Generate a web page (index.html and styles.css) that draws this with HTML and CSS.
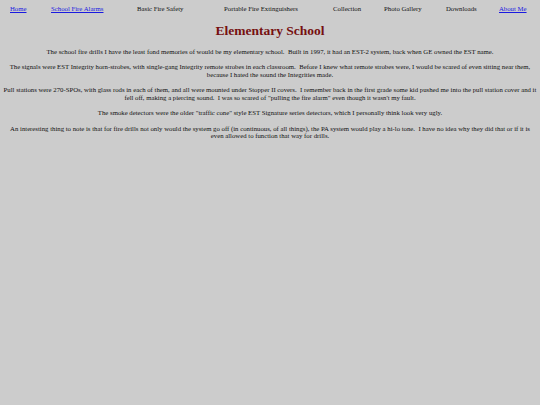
FILE: index.html
```html
<!DOCTYPE html>
<html>
<head>
<meta charset="utf-8">
<title>Elementary School</title>
<link rel="stylesheet" href="styles.css">
</head>
<body>
<nav class="nav">
<a href="#">Home</a>
<a href="#">School Fire Alarms</a>
<span>Basic Fire Safety</span>
<span>Portable Fire Extinguishers</span>
<span>Collection</span>
<span>Photo Gallery</span>
<span>Downloads</span>
<a href="#">About Me</a>
</nav>
<h1 class="title">Elementary School</h1>
<p>The school fire drills I have the least fond memories of would be my elementary school.&nbsp; Built in 1997, it had an EST-2 system, back when GE owned the EST name.</p>
<p>The signals were EST Integrity horn-strobes, with single-gang Integrity remote strobes in each classroom.&nbsp; Before I knew what remote strobes were, I would be scared of even sitting near them, because I hated the sound the Integrities made.</p>
<p>Pull stations were 270-SPOs, with glass rods in each of them, and all were mounted under Stopper II covers.&nbsp; I remember back in the first grade some kid pushed me into the pull station cover and it fell off, making a piercing sound.&nbsp; I was so scared of "pulling the fire alarm" even though it wasn't my fault.</p>
<p>The smoke detectors were the older "traffic cone" style EST Signature series detectors, which I personally think look very ugly.</p>
<p>An interesting thing to note is that for fire drills not only would the system go off (in continuous, of all things), the PA system would play a hi-lo tone.&nbsp; I have no idea why they did that or if it is even allowed to function that way for drills.</p>
</body>
</html>
```
FILE: styles.css
```css
html { background: #cccccc; }
body {
  margin: 2px 3px;
  font-family: "Liberation Serif", "Times New Roman", serif;
  font-size: 6.75px;
  line-height: 7.5px;
  color: #111;
  text-align: center;
}
a { color: #1a1ae0; }
.nav {
  display: grid;
  grid-template-columns: 41px 86px 87px 109px 51px 62px 53px 1fr;
  padding: 3px 0 2px 7px;
  text-align: left;
  white-space: nowrap;
}
.title {
  font-family: "Liberation Serif", "DejaVu Serif", serif;
  color: #761010;
  font-size: 13.5px;
  line-height: 16px;
  font-weight: bold;
  margin: 8px 0 9px;
}
p { margin: 8px 0; }
```
